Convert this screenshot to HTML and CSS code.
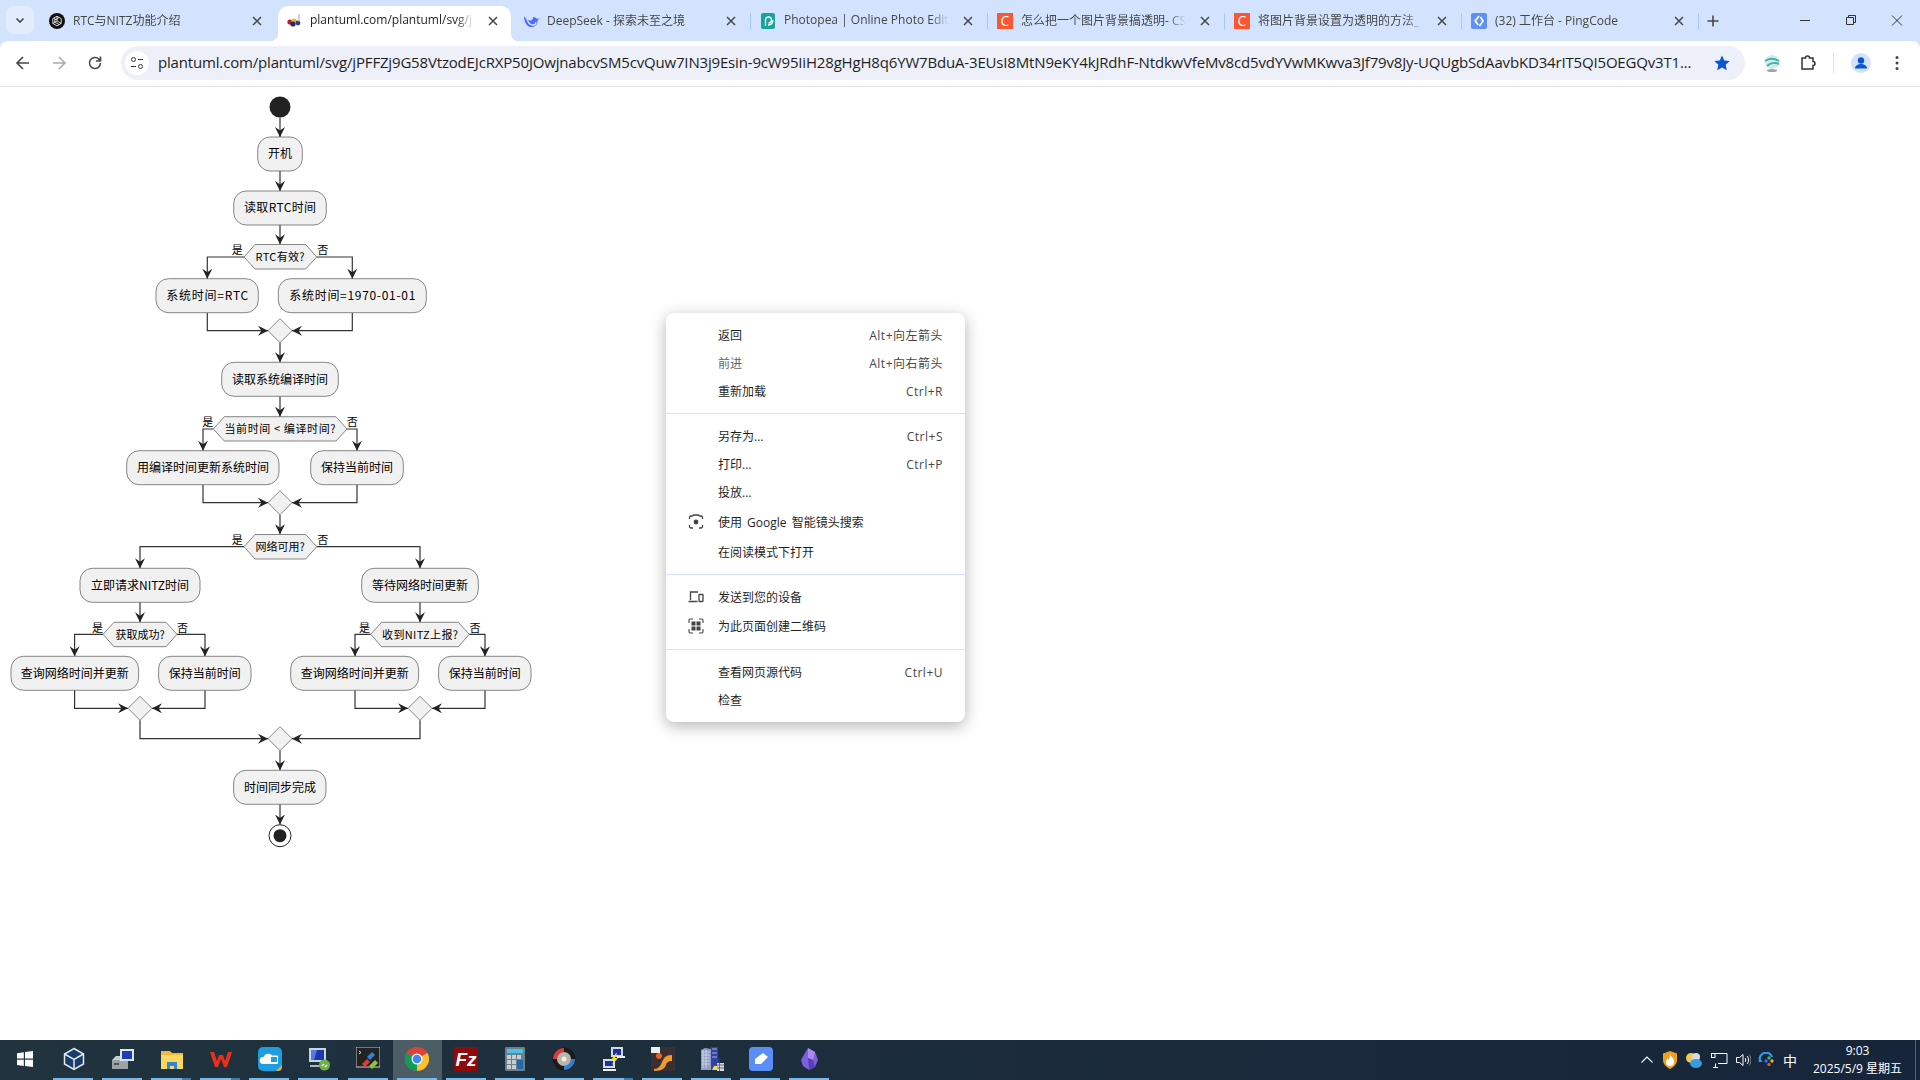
FILE: index.html
```html
<!DOCTYPE html>
<html lang="zh-CN">
<head>
  <meta charset="UTF-8">
  <title>plantuml.com/plantuml/svg</title>
  <link rel="stylesheet" href="styles.css">
</head>
<body>

<div class="tabstrip">
  <div class="tab-search">
    <svg width="12" height="12" viewBox="0 0 12 12"><path d="M2.500 4.500 6 8l3.500-3.500" class="ico-line2"/></svg>
  </div>

  <div class="tab">
    <svg class="favicon" viewBox="0 0 16 16"><circle cx="8" cy="8" r="8" fill="#111"/><path d="M8 3.200 12.200 5.600v4.800L8 12.800 3.800 10.400V5.600zM8 3.200v4.800l4.200 2.400M8 8l-4.200 2.400M5.800 4.500v4.800l4.400 2.200M10.200 4.500 5.800 7" fill="none" stroke="#fff" stroke-width=".8"/></svg>
    <span class="tab-title">RTC与NITZ功能介绍</span>
    <svg class="tab-close" viewBox="0 0 14 14"><path d="M3 3l8 8M11 3l-8 8"/></svg>
  </div>
  <div class="tab active">
    <svg class="favicon" viewBox="0 0 16 16"><circle cx="4" cy="9" r="2.600" fill="#a8232e"/><circle cx="8" cy="8" r="2.600" fill="#f2b632"/><circle cx="7" cy="11" r="2.600" fill="#2a2a5e"/><circle cx="12" cy="10" r="2.400" fill="#3a3a7a"/><path d="M13 1v8" stroke="#8ba7d8"/></svg>
    <span class="tab-title">plantuml.com/plantuml/svg/j</span>
    <svg class="tab-close" viewBox="0 0 14 14"><path d="M3 3l8 8M11 3l-8 8"/></svg>
  </div>
  <div class="tab sep">
    <svg class="favicon" viewBox="0 0 16 16"><path d="M1 3c2 3 3 4 6 4.500 2 .3 3-1 3-3.500 2 0 3 .8 4 2l2-1-1.500 3c0 4-3 6-6.500 6C4 14 1 9 1 3z" fill="#4d6bfe"/><path d="M4 6c1 4 3 6 6 6 2 0 3-1 3-3" fill="none" stroke="#d3e3fd" stroke-width="1.300"/></svg>
    <span class="tab-title">DeepSeek - 探索未至之境</span>
    <svg class="tab-close" viewBox="0 0 14 14"><path d="M3 3l8 8M11 3l-8 8"/></svg>
  </div>
  <div class="tab sep">
    <svg class="favicon" viewBox="0 0 16 16"><rect x="1" width="14" height="16" rx="2" fill="#18a497"/><path d="M5.500 13V7a3 3 0 1 1 3 3M8 12c3 0 5-2 5-5" fill="none" stroke="#fff" stroke-width="1.300"/></svg>
    <span class="tab-title">Photopea | Online Photo Edit</span>
    <svg class="tab-close" viewBox="0 0 14 14"><path d="M3 3l8 8M11 3l-8 8"/></svg>
  </div>
  <div class="tab sep">
    <span class="favicon csdn">C</span>
    <span class="tab-title">怎么把一个图片背景搞透明- CS</span>
    <svg class="tab-close" viewBox="0 0 14 14"><path d="M3 3l8 8M11 3l-8 8"/></svg>
  </div>
  <div class="tab sep">
    <span class="favicon csdn">C</span>
    <span class="tab-title">将图片背景设置为透明的方法_</span>
    <svg class="tab-close" viewBox="0 0 14 14"><path d="M3 3l8 8M11 3l-8 8"/></svg>
  </div>
  <div class="tab sep">
    <svg class="favicon" viewBox="0 0 16 16"><rect width="16" height="16" rx="2" fill="#5e90f5"/><path d="M8 3 4.200 8l3 4M9.500 4l2.500 4-3.500 5" fill="none" stroke="#fff" stroke-width="1.700"/></svg>
    <span class="tab-title">(32) 工作台 - PingCode</span>
    <svg class="tab-close" viewBox="0 0 14 14"><path d="M3 3l8 8M11 3l-8 8"/></svg>
  </div>

  <svg class="new-tab" width="14" height="14" viewBox="0 0 14 14"><path d="M7 1.500v11M1.500 7h11" class="ico-line2"/></svg>

  <div class="win-controls">
    <svg width="46" height="32" viewBox="0 0 46 32"><path d="M18 16.500h10" class="ico-line1"/></svg>
    <svg width="46" height="32" viewBox="0 0 46 32"><path d="M18.500 13.500h7v7h-7zM20.500 13.500v-2h7v7h-2" class="ico-line1"/></svg>
    <svg width="46" height="32" viewBox="0 0 46 32"><path d="M18 11.500l10 10M28 11.500l-10 10" class="ico-line1"/></svg>
  </div>
</div>

<div class="toolbar">
  <svg class="tool-btn" viewBox="0 0 20 20"><path d="M16 10H4.500M10 4l-6 6 6 6" class="ico-line2"/></svg>
  <svg class="tool-btn" viewBox="0 0 20 20"><path d="M4 10h11.500M10 4l6 6-6 6" class="ico-line2 faded"/></svg>
  <svg class="tool-btn" viewBox="0 0 20 20"><path d="M15.500 10a5.500 5.500 0 1 1-1.600-3.900L15.500 8M15.500 3.500V8H11" class="ico-line2"/></svg>

  <div class="omnibox">
    <div class="site-info">
      <svg width="16" height="16" viewBox="0 0 16 16"><circle cx="4.500" cy="4.500" r="2" class="ico-line1"/><path d="M9 4.500h5M2 11.500h5" class="ico-line1"/><circle cx="11.500" cy="11.500" r="2" class="ico-line1"/></svg>
    </div>
    <div class="url">plantuml.com/plantuml/svg/jPFFZj9G58VtzodEJcRXP50JOwjnabcvSM5cvQuw7IN3j9Esin-9cW95IiH28gHgH8q6YW7BduA-3EUsI8MtN9eKY4kJRdhF-NtdkwVfeMv8cd5vdYVwMKwva3Jf79v8Jy-UQUgbSdAavbKD34rIT5QI5OEGQv3T1...</div>
    <svg class="star" width="18" height="18" viewBox="0 0 18 18"><path d="M9 1.500l2.300 5 5.400.6-4 3.700 1.100 5.400L9 13.500l-4.800 2.700 1.100-5.400-4-3.700 5.400-.6z" fill="#0b57d0"/></svg>
  </div>

  <svg class="ext-ico" viewBox="0 0 20 20"><circle cx="10" cy="9" r="7" fill="#d9e6e8"/><path d="M3 8c4-3 9-3 14 0M5 13c3-3 8-4 12-2" fill="none" stroke="#35b8b0" stroke-width="2"/><ellipse cx="10" cy="17.500" rx="5" ry="1.500" fill="#9aa6a8"/></svg>
  <svg class="ext-ico puzzle" viewBox="0 0 20 20"><path d="M4 5h3.500a2 2 0 0 1 4 0H15v3.500a2 2 0 0 1 0 4V16H4z" fill="none" stroke="#333" stroke-width="1.500"/></svg>
  <div class="tool-sep"></div>
  <svg class="avatar" viewBox="0 0 20 20"><circle cx="10" cy="10" r="10" fill="#d3e3fd"/><circle cx="10" cy="7.500" r="3.200" fill="#0b57d0"/><path d="M4 15.500c0-3 3-4.500 6-4.500s6 1.500 6 4.500z" fill="#0b57d0"/></svg>
  <svg class="kebab" viewBox="0 0 4 16"><circle cx="2" cy="2.500" r="1.500"/><circle cx="2" cy="8" r="1.500"/><circle cx="2" cy="13.500" r="1.500"/></svg>
</div>

<main class="page">
  <svg class="diagram" width="560" height="800" viewBox="0 87 560 800">
    <defs>
      <marker id="head" markerUnits="userSpaceOnUse" markerWidth="12" markerHeight="12" refX="10" refY="5" orient="auto">
        <path d="M0 0 10 5 0 10 3.500 5z" fill="#222"/>
      </marker>
    </defs>

    <circle cx="280" cy="107" r="10.500" fill="#222"/>

    <!-- connectors -->
    <g class="edges">
      <path d="M280 117.500V137"/>
      <path d="M280 171V191"/>
      <path d="M280 225V244.300"/>
      <path d="M244 257H207.300V278.700"/>
      <path d="M316.700 257H352.300V278.700"/>
      <path d="M207.300 313V330.700H268"/>
      <path d="M352.300 313V330.700H292"/>
      <path d="M280 342.700V362.300"/>
      <path d="M280 396.500V416.700"/>
      <path d="M213.300 429H203V450.700"/>
      <path d="M347 429H357V450.700"/>
      <path d="M203 484.700V502.700H268"/>
      <path d="M357 484.700V502.700H292"/>
      <path d="M280 514.700V534.300"/>
      <path d="M244 546.700H140V568.300"/>
      <path d="M316.700 546.700H420V568.300"/>
      <path d="M140 602.300V622.300"/>
      <path d="M420 602.300V622.300"/>
      <path d="M103 634.300H74.600V656.300"/>
      <path d="M177 634.300H205V656.300"/>
      <path d="M370.700 634.300H355V656.300"/>
      <path d="M469.300 634.300H485V656.300"/>
      <path d="M74.600 690.300V708.300H128"/>
      <path d="M205 690.300V708.300H152"/>
      <path d="M355 690.300V708.300H408"/>
      <path d="M485 690.300V708.300H432"/>
      <path d="M140 720.300V738.700H268"/>
      <path d="M420 720.300V738.700H292"/>
      <path d="M280 750.700V770.300"/>
      <path d="M280 804.300V824.500"/>
    </g>

    <!-- actions -->
    <g class="nodes">
      <rect x="257.700" y="137" width="44.600" height="34" rx="12.500"/>
      <rect x="233.700" y="191" width="92.600" height="34" rx="12.500"/>
      <rect x="156" y="278.700" width="102.300" height="34" rx="12.500"/>
      <rect x="278.300" y="278.700" width="148" height="34" rx="12.500"/>
      <rect x="221.700" y="362.300" width="116.600" height="34" rx="12.500"/>
      <rect x="126.700" y="450.700" width="152.300" height="34" rx="12.500"/>
      <rect x="310.700" y="450.700" width="92.600" height="34" rx="12.500"/>
      <rect x="80" y="568.300" width="120" height="34" rx="12.500"/>
      <rect x="361.700" y="568.300" width="116.600" height="34" rx="12.500"/>
      <rect x="11" y="656.300" width="127.600" height="34" rx="12.500"/>
      <rect x="158.600" y="656.300" width="92.400" height="34" rx="12.500"/>
      <rect x="290.700" y="656.300" width="127.900" height="34" rx="12.500"/>
      <rect x="438.600" y="656.300" width="92.400" height="34" rx="12.500"/>
      <rect x="233.600" y="770.300" width="92.400" height="34" rx="12.500"/>

      <polygon points="255,244.500 305.700,244.500 316.700,257 305.700,269 255,269 244,257"/>
      <polygon points="224.300,416.700 336,416.700 347,429 336,441 224.300,441 213.300,429"/>
      <polygon points="255,534.500 305.700,534.500 316.700,546.700 305.700,559 255,559 244,546.700"/>
      <polygon points="114,622.300 166,622.300 177,634.300 166,646.700 114,646.700 103,634.300"/>
      <polygon points="381.700,622.300 458.300,622.300 469.300,634.300 458.300,646.700 381.700,646.700 370.700,634.300"/>

      <polygon points="280,318.700 292,330.700 280,342.700 268,330.700"/>
      <polygon points="280,490.700 292,502.700 280,514.700 268,502.700"/>
      <polygon points="140,696.300 152,708.300 140,720.300 128,708.300"/>
      <polygon points="420,696.300 432,708.300 420,720.300 408,708.300"/>
      <polygon points="280,726.700 292,738.700 280,750.700 268,738.700"/>
    </g>

    <g class="labels">
      <text x="280" y="158">开机</text>
      <text x="280" y="212" textLength="72">读取RTC时间</text>
      <text x="207.200" y="300" textLength="82">系统时间=RTC</text>
      <text x="352.300" y="300" textLength="126">系统时间=1970-01-01</text>
      <text x="280" y="383.500">读取系统编译时间</text>
      <text x="203" y="472">用编译时间更新系统时间</text>
      <text x="357" y="472">保持当前时间</text>
      <text x="140" y="589.800">立即请求NITZ时间</text>
      <text x="420" y="589.800">等待网络时间更新</text>
      <text x="74.800" y="677.800">查询网络时间并更新</text>
      <text x="204.800" y="677.800">保持当前时间</text>
      <text x="354.700" y="677.800">查询网络时间并更新</text>
      <text x="484.800" y="677.800">保持当前时间</text>
      <text x="280" y="791.800">时间同步完成</text>
    </g>
    <g class="labels small">
      <text x="280" y="261" textLength="49">RTC有效?</text>
      <text x="280" y="433" textLength="111">当前时间 &lt; 编译时间?</text>
      <text x="280" y="550.700">网络可用?</text>
      <text x="140" y="639">获取成功?</text>
      <text x="420" y="639" textLength="76">收到NITZ上报?</text>
      <text x="237.300" y="254">是</text>
      <text x="322.700" y="254">否</text>
      <text x="207.700" y="425.700">是</text>
      <text x="352.300" y="425.700">否</text>
      <text x="237.300" y="544">是</text>
      <text x="322.700" y="544">否</text>
      <text x="97.500" y="631.700">是</text>
      <text x="182.500" y="631.700">否</text>
      <text x="364.600" y="631.700">是</text>
      <text x="475" y="631.700">否</text>
    </g>

    <circle cx="280" cy="835.700" r="11" fill="#fff" stroke="#222"/>
    <circle cx="280" cy="835.700" r="6.500" fill="#222"/>
  </svg>

  <div class="ctx-menu">
    <div class="ctx-row"><span class="ctx-label">返回</span><span class="ctx-key">Alt+向左箭头</span></div>
    <div class="ctx-row"><span class="ctx-label dim">前进</span><span class="ctx-key">Alt+向右箭头</span></div>
    <div class="ctx-row"><span class="ctx-label">重新加载</span><span class="ctx-key">Ctrl+R</span></div>
    <div class="ctx-sep"></div>
    <div class="ctx-row"><span class="ctx-label">另存为...</span><span class="ctx-key">Ctrl+S</span></div>
    <div class="ctx-row"><span class="ctx-label">打印...</span><span class="ctx-key">Ctrl+P</span></div>
    <div class="ctx-row"><span class="ctx-label">投放...</span></div>
    <div class="ctx-row tall">
      <svg class="ctx-ico" viewBox="0 0 16 16"><path d="M1.500 5V3.500a1.500 1.500 0 0 1 1.500-1.500h1.500l1-1h5l1 1H13a1.500 1.500 0 0 1 1.500 1.500V5M1.500 11v1.500A1.500 1.500 0 0 0 3 14h2M14.500 11v1.500A1.500 1.500 0 0 1 13 14h-2" fill="none" stroke="#444" stroke-width="1.300"/><circle cx="8" cy="8" r="2.400" fill="#444"/></svg>
      <span class="ctx-label lens">使用 Google 智能镜头搜索</span>
    </div>
    <div class="ctx-row tall"><span class="ctx-label">在阅读模式下打开</span></div>
    <div class="ctx-sep"></div>
    <div class="ctx-row">
      <svg class="ctx-ico" viewBox="0 0 16 16"><path d="M10 3H2.500v8M.5 12.500h9" fill="none" stroke="#444" stroke-width="1.300"/><rect x="11" y="5.500" width="4" height="7" rx=".5" fill="none" stroke="#444" stroke-width="1.300"/></svg>
      <span class="ctx-label">发送到您的设备</span>
    </div>
    <div class="ctx-row tall lift">
      <svg class="ctx-ico" viewBox="0 0 16 16"><path d="M1 5V2.500A1.500 1.500 0 0 1 2.500 1H5M11 1h2.500A1.500 1.500 0 0 1 15 2.500V5M1 11v2.500A1.500 1.500 0 0 0 2.500 15H5M11 15h2.500a1.500 1.500 0 0 0 1.500-1.500V11" fill="none" stroke="#444" stroke-width="1.100"/><path d="M3.500 3.500h4v4h-4zM8.500 3.500h4v4h-4zM3.500 8.500h4v4h-4zM8.500 8.500h4v4h-4z" fill="#444"/></svg>
      <span class="ctx-label">为此页面创建二维码</span>
    </div>
    <div class="ctx-sep"></div>
    <div class="ctx-row"><span class="ctx-label">查看网页源代码</span><span class="ctx-key">Ctrl+U</span></div>
    <div class="ctx-row"><span class="ctx-label">检查</span></div>
  </div>
</main>

<footer class="taskbar">
  <div class="task-btn start">
    <svg viewBox="0 0 18 18"><path d="M1 3.200 7.800 2.200V8.500H1zM9 2 17 1V8.500H9zM1 9.700H7.800V16L1 15zM9 9.700H17V17L9 15.900z" fill="#fff"/></svg>
  </div>
  <div class="task-btn on">
    <svg viewBox="0 0 24 24"><path d="M12 1.500 21.500 7v10L12 22.500 2.500 17V7z" fill="#1a3c68" stroke="#dfe7ef" stroke-width="1.500"/><path d="M2.500 7 12 12.500 21.500 7M12 12.500v10" fill="none" stroke="#dfe7ef" stroke-width="1.500"/></svg>
  </div>
  <div class="task-btn on">
    <svg viewBox="0 0 24 24"><path d="M1 13h16v9H1z" fill="#9aa3a6"/><path d="M1 13l4-4h8v4z" fill="#c6cccf"/><rect x="9" y="2" width="14" height="12" fill="#dfe5ea"/><rect x="11" y="4" width="10" height="8" fill="#1c3fb8"/><rect x="3" y="16" width="5" height="2" fill="#555"/></svg>
  </div>
  <div class="task-btn on multi">
    <svg viewBox="0 0 24 24"><path d="M1 4h9l2 2h11v16H1z" fill="#f0b93e"/><path d="M1 8h22v14H1z" fill="#fbd764"/><path d="M7 15h10v7h-3v-3h-4v3H7z" fill="#2e86d8"/></svg>
  </div>
  <div class="task-btn on multi">
    <svg viewBox="0 0 24 24"><path d="M1 5l5 15h3l3-8 3 8h3l5-15h-4l-3 9-2-6h-4l-2 6-3-9z" fill="#e8301c"/></svg>
  </div>
  <div class="task-btn on">
    <svg viewBox="0 0 24 24"><rect width="24" height="24" rx="5" fill="#1e9de0"/><path d="M5 17a3.500 3.500 0 0 1 .5-7A5 5 0 0 1 14 8.500h5a1 1 0 0 1 1 1V16a1 1 0 0 1-1 1z" fill="#fff"/><rect x="13" y="10" width="6" height="5" fill="#1e9de0"/><path d="M24 18v2a4 4 0 0 1-4 4h-2z" fill="#d9b23c"/></svg>
  </div>
  <div class="task-btn on">
    <svg viewBox="0 0 24 24"><rect x="2" y="1" width="17" height="14" fill="#cdd5dc"/><rect x="4" y="3" width="13" height="10" fill="#1a39b0"/><path d="M4 3h6l-3 10H4z" fill="#5a79e0"/><path d="M7 15h7v3H3v2h14v-5z" fill="#aeb6bb"/><circle cx="17.500" cy="18" r="5.500" fill="#6fb04a"/><path d="M15 19l2-2M18 20l2-2" stroke="#fff" stroke-width="1.300"/></svg>
  </div>
  <div class="task-btn on">
    <svg viewBox="0 0 24 24"><rect x="0" y="0" width="24" height="20" fill="#222" stroke="#ccc"/><path d="M3 4l2 1.500L3 7" fill="none" stroke="#ddd"/><path d="M6 17l5-5 3 3-5 5z" fill="#e23b3b"/><path d="M11 10l5-5 3 3-5 5z" fill="#2f86d8"/><path d="M13 19l6-6 3 3-6 6z" fill="#8cc63f"/></svg>
  </div>
  <div class="task-btn on active">
    <svg viewBox="0 0 24 24"><circle cx="12" cy="12" r="12" fill="#db4437"/><path d="M12 12 22.400 6A12 12 0 0 1 12 24z" fill="#fbc02d"/><path d="M12 12 12 24A12 12 0 0 1 1.600 6z" fill="#0f9d58"/><path d="M1.600 6A12 12 0 0 1 22.400 6H12a6 6 0 0 0-5.200 3z" fill="#db4437"/><circle cx="12" cy="12" r="5.500" fill="#fff"/><circle cx="12" cy="12" r="4.300" fill="#4285f4"/></svg>
  </div>
  <div class="task-btn on">
    <svg viewBox="0 0 24 24"><rect width="24" height="24" fill="#8f0a0a"/><text x="12" y="19" class="fz-text">Fz</text></svg>
  </div>
  <div class="task-btn on">
    <svg viewBox="0 0 24 24"><rect x="2" width="20" height="24" rx="1" fill="#6f7f88"/><rect x="4" y="2" width="16" height="4" fill="#4cc2e8"/><path d="M4 8h4v4H4zM9 8h4v4H9zM14 8h4v4h-4zM4 13h4v4H4zM9 13h4v4H9zM4 18h4v4H4zM9 18h4v4H9z" fill="#c5ced3"/><rect x="14" y="13" width="6" height="9" fill="#1e6bb0"/></svg>
  </div>
  <div class="task-btn on">
    <svg viewBox="0 0 24 24"><circle cx="12" cy="12" r="11.500" fill="#1a1a1a"/><path d="M1 12A11 11 0 0 1 12 1v4a7 7 0 0 0-7 7z" fill="#d63a3a"/><path d="M23 12A11 11 0 0 1 12 23v-4a7 7 0 0 0 7-7z" fill="#2f7ed8"/><circle cx="12" cy="12" r="7" fill="#b9b5a8"/><circle cx="12" cy="12" r="2.500" fill="#eee"/></svg>
  </div>
  <div class="task-btn on multi">
    <svg viewBox="0 0 24 24"><rect x="9" y="0" width="12" height="10" fill="#d5dadf"/><rect x="11" y="2" width="8" height="6" fill="#1a2fa8"/><rect x="1" y="12" width="12" height="9" fill="#d5dadf"/><rect x="3" y="14" width="8" height="5" fill="#1a2fa8"/><path d="M1 22h13v2H1zM15 9h8v2h-8z" fill="#eee"/><path d="M14 6 9 13h3l-2 5 6-7h-3l2-5z" fill="#f6e01c"/></svg>
  </div>
  <div class="task-btn on">
    <svg viewBox="0 0 24 24"><rect width="24" height="24" fill="#3a3034"/><rect x="0" y="0" width="9" height="6" fill="#eee"/><circle cx="8" cy="9" r="3" fill="#e8631c"/><path d="M3 22c5 0 6-3 8-7s3-7 10-7v6c-4 0-5 1-6 4s-4 6-12 6z" fill="#f29a2e"/></svg>
  </div>
  <div class="task-btn on">
    <svg viewBox="0 0 24 24"><path d="M1 3l4-2 6 1v21H1z" fill="#8f9dc7"/><path d="M11 0h7v23h-7z" fill="#3142a8"/><path d="M18 10l2 3v10h-2z" fill="#2a3a90"/><path d="M2 5h8M2 8h8M2 11h8M2 14h8M2 17h8M3 3v18M6 3v18M12 2h5M12 6h5M12 10h5" stroke="#dfe4f2" stroke-width=".7"/><path d="M12 23l2-4h3l2 4z" fill="#f0dd4a"/><rect x="17" y="16" width="7" height="8" fill="#d5d8de"/><path d="M17 18h7M17 21h7M19.500 16v8" stroke="#667"/></svg>
  </div>
  <div class="task-btn on">
    <svg viewBox="0 0 24 24"><rect width="24" height="24" rx="4" fill="#5b8df6"/><path d="M14 6l5 4-7 7H6v-5z" fill="#fff"/></svg>
  </div>
  <div class="task-btn on">
    <svg viewBox="0 0 24 24"><path d="M10 1l7 4 3 8-3 7-6 3-6-4-2-6 4-7z" fill="#7f5fe0"/><path d="M10 1l7 4-2 8-5-2z" fill="#a88bf2"/><path d="M10 11l5 2 2 7-6 3z" fill="#5a3fbc"/></svg>
  </div>

  <div class="tray">
    <svg width="16" height="16" viewBox="0 0 16 16"><path d="M2.500 10.500 8 5l5.500 5.500" fill="none" stroke="#fff" stroke-width="1.100"/></svg>
    <svg width="16" height="18" viewBox="0 0 16 18"><path d="M1 2.500 8 0l7 2.500V9c0 4-3 7-7 9-4-2-7-5-7-9z" fill="#f0a020"/><path d="M8 3c1 3 4 4 4 8a4 4 0 0 1-8 0c0-2 1-3 2-4 0 1 .5 1.500 1 2 .5-2 1-4 1-6z" fill="#fff"/></svg>
    <svg width="18" height="18" viewBox="0 0 18 18"><circle cx="6" cy="7" r="5" fill="#f2c94c"/><circle cx="11" cy="6" r="4" fill="#d6dce2"/><ellipse cx="11" cy="12.500" rx="6" ry="4.500" fill="#3a9ae0"/></svg>
    <svg width="18" height="16" viewBox="0 0 18 16"><path d="M3 5.500V1.500h14v10H8M3 15.500h5M5.500 11.500v4" fill="none" stroke="#fff"/><rect x="1.500" y="1.500" width="3.500" height="4" fill="#1d2b3d" stroke="#fff"/></svg>
    <svg width="16" height="16" viewBox="0 0 16 16"><path d="M1.500 5.500h3L8 2.500v11l-3.500-3h-3z" fill="none" stroke="#fff"/><path d="M10 6c1 1 1 3 0 4M12 4c2 2 2 6 0 8" fill="none" stroke="#fff"/><path d="M14 2.500c2.500 3 2.500 8 0 11" fill="none" stroke="#7d8794"/></svg>
    <svg width="18" height="16" viewBox="0 0 18 16"><path d="M2 9A6 6 0 0 1 14 5" fill="none" stroke="#2f9ae8" stroke-width="2.200"/><path d="M2 6l-1.500 4h4z" fill="#2f9ae8"/><circle cx="11" cy="6" r="1.700" fill="#3fb950"/><circle cx="14" cy="9" r="1.700" fill="#e8b23c"/><circle cx="8" cy="9" r="1.700" fill="#2f6fe8"/><circle cx="11" cy="12.500" r="1.700" fill="#e05a2e"/></svg>
    <span class="ime">中</span>
  </div>
  <div class="clock">
    <span>9:03</span>
    <span>2025/5/9 星期五</span>
  </div>
  <div class="show-desktop"></div>
</footer>

</body>
</html>
```

FILE: styles.css
```css
* {
  box-sizing: border-box;
}

html, body {
  margin: 0;
  height: 100%;
}

body {
  width: 1920px;
  height: 1080px;
  overflow: hidden;
  display: flex;
  flex-direction: column;
  background-color: #d3e3fd;
  color: #1f1f1f;
  font-family: "Open Sans", "Noto Sans CJK SC", sans-serif;
  font-size: 12px;
}

.ico-line1 {
  fill: none;
  stroke: #333;
  stroke-width: 1;
}

.ico-line2 {
  fill: none;
  stroke: #474747;
  stroke-width: 1.6;
}

.ico-line2.faded {
  stroke: #a8abb0;
}

/* Tabs */
.tabstrip {
  height: 41px;
  display: flex;
  flex-shrink: 0;
  align-items: flex-end;
}

.tab-search {
  width: 28px;
  height: 28px;
  margin: 0 4px 7px 6px;
  border-radius: 8px;
  background-color: #e3ecfc;
  display: flex;
  align-items: center;
  justify-content: center;
}

.tab {
  width: 237px;
  height: 35px;
  padding: 0 11px;
  display: flex;
  align-items: center;
  position: relative;
  color: #444746;
}

.tab.sep::after {
  content: "";
  position: absolute;
  right: -2px;
  top: 7px;
  width: 1px;
  height: 16px;
  background-color: #a8c7fa;
}

.tab.active {
  width: 233px;
  margin: 0 1px 0 3px;
  padding: 0 11px 0 8px;
  border-radius: 10px 10px 0 0;
  background-color: #fff;
  color: #1f1f1f;
}

.tab.active::before,
.tab.active::after {
  content: "";
  position: absolute;
  bottom: 0;
  width: 8px;
  height: 8px;
}

.tab.active::before {
  left: -8px;
  background: radial-gradient(circle at 0 0, transparent 8px, #fff 8.500px);
}

.tab.active::after {
  right: -8px;
  background: radial-gradient(circle at 100% 0, transparent 8px, #fff 8.500px);
}

.favicon {
  width: 16px;
  height: 16px;
  flex-shrink: 0;
  margin-bottom: 6px;
}

.csdn {
  background-color: #fc5531;
  color: #fff;
  font-size: 14px;
  line-height: 16px;
  text-align: center;
}

.tab-title {
  flex: 1;
  margin: 0 12px 8px 8px;
  white-space: nowrap;
  -webkit-mask-image: linear-gradient(to left, transparent 0, #000 18px);
  mask-image: linear-gradient(to left, transparent 0, #000 18px);
}

.tab-close {
  width: 14px;
  height: 14px;
  flex-shrink: 0;
  margin-bottom: 6px;
  fill: none;
  stroke: #444746;
  stroke-width: 1.500;
}

.new-tab {
  margin: 0 0 13px 9px;
}

.win-controls {
  margin-left: auto;
  align-self: flex-start;
  display: flex;
  margin-top: 4px;
}

/* Toolbar */
.toolbar {
  height: 46px;
  flex-shrink: 0;
  padding: 0 12px 1px 0;
  display: flex;
  align-items: center;
  background-color: #fff;
  border-radius: 8px 8px 0 0;
  border-bottom: 1px solid #e3e3e3;
}

.tool-btn {
  width: 20px;
  height: 20px;
  margin-left: 13px;
  margin-right: 3px;
}

.omnibox {
  width: 1624px;
  height: 34px;
  margin-left: 13px;
  padding: 0 14px 0 4px;
  border-radius: 17px;
  background-color: #edf0f8;
  display: flex;
  align-items: center;
}

.site-info {
  width: 24px;
  height: 24px;
  border-radius: 50%;
  background-color: #fff;
  display: flex;
  align-items: center;
  justify-content: center;
  flex-shrink: 0;
}

.url {
  flex: 1;
  margin: 0 0 2px 9px;
  white-space: nowrap;
  font-size: 15px;
  letter-spacing: -0.17px;
  color: #1f1f1f;
}

.star {
  flex-shrink: 0;
  margin-left: 20px;
}

.ext-ico {
  width: 20px;
  height: 20px;
  margin-left: 17px;
}

.ext-ico.puzzle {
  margin-left: 16px;
}

.tool-sep {
  width: 1px;
  height: 20px;
  margin: 0 17px 0 15px;
  background-color: #d3e3fd;
}

.avatar {
  width: 20px;
  height: 20px;
}

.kebab {
  width: 4px;
  height: 16px;
  margin-left: 24px;
  fill: #444;
}

/* Page with the diagram */
.page {
  flex: 1;
  position: relative;
  background-color: #fff;
  overflow: hidden;
}

.diagram {
  display: block;
}

.edges path {
  fill: none;
  stroke: #333;
  stroke-width: 1.2;
  marker-end: url(#head);
}

.nodes rect,
.nodes polygon {
  fill: #f1f1f1;
  stroke: #555;
  stroke-width: .7;
}

.labels text {
  font-family: "Noto Sans CJK SC", sans-serif;
  font-size: 12px;
  text-anchor: middle;
  fill: #000;
}

.labels.small text {
  font-size: 11px;
}

/* Right click menu */
.ctx-menu {
  position: absolute;
  left: 666px;
  top: 226px;
  width: 299px;
  padding: 9px 0 7px;
  border-radius: 8px;
  background-color: #fff;
  box-shadow: 0 4px 16px rgba(0,0,0,0.3);
}

.ctx-row {
  height: 28px;
  padding: 0 22px 2px 52px;
  display: flex;
  align-items: center;
  justify-content: space-between;
  position: relative;
}

.ctx-row.tall {
  height: 30px;
  padding-bottom: 0;
}

.ctx-row.tall.lift {
  padding-bottom: 2px;
}

.ctx-label.dim {
  color: #5f6368;
}

.ctx-label.lens {
  word-spacing: 2px;
}

.ctx-key {
  color: #474747;
  letter-spacing: .5px;
}

.ctx-ico {
  position: absolute;
  left: 22px;
  width: 16px;
  height: 16px;
}

.ctx-sep {
  height: 1px;
  margin: 7px 0 9px;
  background-color: #d3e3fd;
}

/* Taskbar */
.taskbar {
  height: 40px;
  flex-shrink: 0;
  display: flex;
  align-items: stretch;
  background: linear-gradient(to right, #20333e, #17253a);
  color: #fff;
}

.task-btn {
  width: 49.100px;
  position: relative;
  display: flex;
  align-items: center;
  justify-content: center;
}

.task-btn svg {
  width: 24px;
  height: 24px;
  margin-bottom: 2px;
}

.task-btn.start {
  width: 49px;
}

.task-btn.start svg {
  width: 18px;
  height: 18px;
}

.task-btn.active {
  background-color: #4c5d66;
}

.task-btn.on::after {
  content: "";
  position: absolute;
  left: 4px;
  bottom: 0;
  width: 40px;
  height: 2px;
  background-color: #76b9ed;
}

.task-btn.multi::before {
  content: "";
  position: absolute;
  right: 5px;
  bottom: 0;
  width: 9px;
  height: 2px;
  z-index: 1;
  background-color: #3f7ca8;
}

.fz-text {
  font-family: "Liberation Sans", sans-serif;
  font-size: 19px;
  font-weight: bold;
  font-style: italic;
  text-anchor: middle;
  fill: #fff;
}

.tray {
  margin-left: auto;
  display: flex;
  align-items: center;
  gap: 7px;
}

.ime {
  font-family: "Noto Sans CJK SC", sans-serif;
  font-size: 14px;
}

.clock {
  width: 115px;
  margin-left: 3px;
  display: flex;
  flex-direction: column;
  align-items: center;
  justify-content: center;
  gap: 2px;
  line-height: 16px;
}

.show-desktop {
  width: 5px;
  border-left: 1px solid #53606c;
}
```
